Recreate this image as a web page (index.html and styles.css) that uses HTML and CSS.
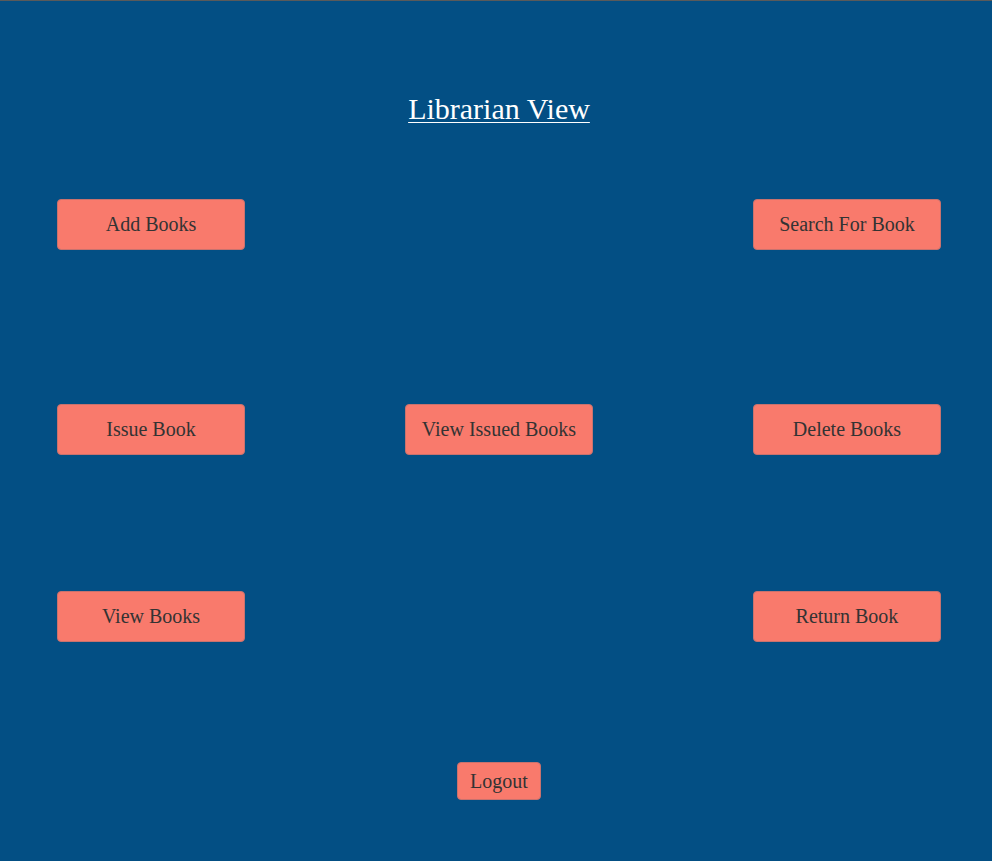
FILE: index.html
```html
<!DOCTYPE html>
<html>
<head>
<meta charset="utf-8">
<title>Librarian View</title>
<link rel="stylesheet" href="styles.css">
</head>
<body>
<div class="page">
  <h1 class="title"><span class="title-text">Librarian View</span></h1>
  <div class="row row-1">
    <button class="btn left">Add Books</button>
    <button class="btn right">Search For Book</button>
  </div>
  <div class="row row-2">
    <button class="btn left">Issue Book</button>
    <button class="btn center">View Issued Books</button>
    <button class="btn right">Delete Books</button>
  </div>
  <div class="row row-3">
    <button class="btn left">View Books</button>
    <button class="btn right">Return Book</button>
  </div>
  <div class="logout-row">
    <button class="btn-logout">Logout</button>
  </div>
</div>
</body>
</html>
```
FILE: styles.css
```css
html, body {
  margin: 0;
  padding: 0;
  background: #034f84;
  height: 100%;
}
.page {
  border-top: 1px solid #5a5a5a;
  padding: 0 51px 0 57px;
  font-family: "Liberation Serif", "Times New Roman", serif;
  min-height: 860px;
}
.title {
  margin: 91px 0 0;
  text-align: center;
  font-weight: normal;
  font-size: 30px;
  line-height: 34px;
  color: #ffffff;
}
.title-text {
  text-decoration: underline;
  text-underline-offset: 3px;
  text-decoration-thickness: 1px;
}
.row {
  display: grid;
  grid-template-columns: 1fr 1fr 1fr;
}
.row-1 { margin-top: 73px; }
.row-2 { margin-top: 154px; }
.row-3 { margin-top: 136px; }
.btn, .btn-logout {
  font-family: "Liberation Serif", "Times New Roman", serif;
  font-size: 20px;
  color: #333333;
  background: #f97a6c;
  border: 1px solid #c8726e;
  border-radius: 4px;
  box-sizing: border-box;
  display: inline-flex;
  align-items: center;
  justify-content: center;
  padding: 0;
  cursor: pointer;
}
.btn {
  width: 188px;
  height: 51px;
}
.left { grid-column: 1; justify-self: start; }
.center { grid-column: 2; justify-self: center; }
.right { grid-column: 3; justify-self: end; }
.logout-row {
  margin-top: 120px;
  display: flex;
  justify-content: center;
}
.btn-logout {
  height: 38px;
  padding: 0 12px;
}
```
